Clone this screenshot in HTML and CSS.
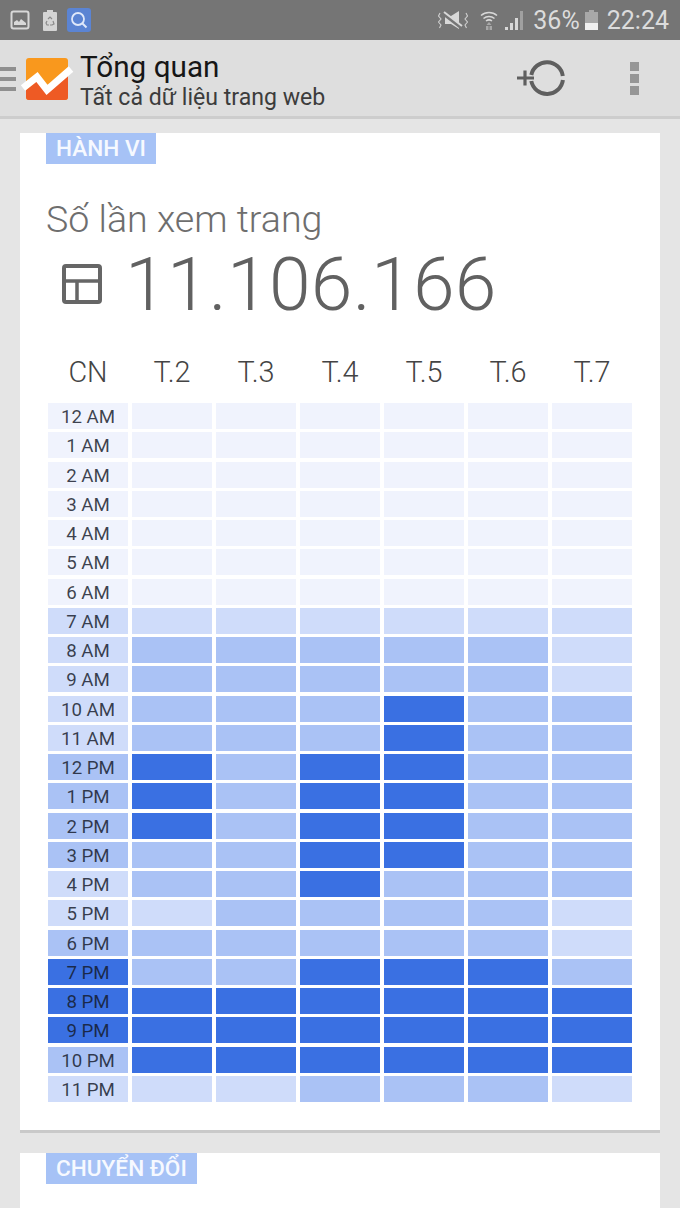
FILE: index.html
```html
<!DOCTYPE html>
<html lang="vi">
<head>
<meta charset="utf-8">
<title>Tổng quan</title>
<link rel="stylesheet" href="styles.css">
</head>
<body>
<header class="status">
  <div class="status-left">
    <svg class="ic" width="20" height="20" viewBox="0 0 20 20"><rect x="1.500" y="1.500" width="17" height="17" rx="2" fill="none" stroke="#d8d8d8" stroke-width="2"/><path d="M4 15v-3l3-2 2 2 2-3 5 4v2z" fill="#d8d8d8"/></svg>
    <svg class="ic" width="14" height="21" viewBox="0 0 14 21"><path d="M4 0h6v2h3a1 1 0 0 1 1 1v17a1 1 0 0 1-1 1H1a1 1 0 0 1-1-1V3a1 1 0 0 1 1-1h3z" fill="#d4d4d4"/><path d="M5 9l2-2 2 2M10 11l1 3-2 1H7M6 15H4l-1-2 1-2" fill="none" stroke="#8a8a8a" stroke-width="1.200"/></svg>
    <span class="search-badge"><svg width="18" height="18" viewBox="0 0 18 18"><circle cx="8" cy="8" r="6" fill="none" stroke="#dfe8fa" stroke-width="1.800"/><path d="M12.500 12.500l4 4" stroke="#dfe8fa" stroke-width="2"/></svg></span>
  </div>
  <div class="status-right">
    <svg class="mute" width="30" height="20" viewBox="0 0 30 20"><path d="M7 6h6l8-5v18l-8-5H7z" fill="#d8d8d8"/><path d="M6 4l18 14" stroke="#757575" stroke-width="3.500"/><path d="M6 2l18 14" stroke="#d8d8d8" stroke-width="2"/><path d="M2 3L0.500 6l2.500 3-2.500 3L3 15l-1.500 3M28 3l1.500 3L27 9l2.500 3-2.500 3 1.500 3" fill="none" stroke="#d0d0d0" stroke-width="1.100"/></svg>
    <svg class="wifi" width="18" height="20" viewBox="0 0 18 20"><path d="M1 5.500a12 12 0 0 1 16 0M3.500 8.500a8.500 8.500 0 0 1 11 0M6 11a5 5 0 0 1 6 0" fill="none" stroke="#d8d8d8" stroke-width="1.500"/><path d="M9 12l2.500 3h-5zM6 16h2.500v4H6zM9.500 16H12v4H9.500z" fill="#a8a8a8"/></svg>
    <svg class="signal" width="20" height="20" viewBox="0 0 20 20"><path d="M0 20v-3h3v3zM5 20v-7h3v7zM10 20V8h3v12z" fill="#d8d8d8"/><path d="M15 20V1h3v19z" fill="#a0a0a0"/></svg>
    <span class="pct">36%</span>
    <svg class="batt" width="13" height="20" viewBox="0 0 13 20"><path d="M4 0h5v2h4v18H0V2h4z" fill="#a8a8a8"/><path d="M0 13h13v7H0z" fill="#f0f0f0"/></svg>
    <span class="clock">22:24</span>
  </div>
</header>

<nav class="appbar">
  <div class="burger"><i></i><i></i><i></i></div>
  <svg class="logo" width="54" height="44" viewBox="0 0 54 44">
    <rect x="6" y="0" width="42" height="42" rx="3" fill="#f9981d"/>
    <path d="M6 32l11-9 10 13 21-19v22a3 3 0 0 1-3 3H9a3 3 0 0 1-3-3z" fill="#ee5a24"/>
    <path d="M3 30l14-11 10 13 24-21" fill="none" stroke="#fff" stroke-width="7"/>
  </svg>
  <div class="titles">
    <div class="title">Tổng quan</div>
    <div class="subtitle">Tất cả dữ liệu trang web</div>
  </div>
  <svg class="add-seg" width="50" height="38" viewBox="0 0 50 38"><path d="M1 19h17M9 11.500v15" stroke="#5f5f5f" stroke-width="3.200"/><path d="M15.300 16a16 16 0 0 1 31.500 1M46.900 21a16 16 0 0 1-31.600 1" fill="none" stroke="#5f5f5f" stroke-width="4"/></svg>
  <div class="overflow"><i></i><i></i><i></i></div>
</nav>

<main class="content">
<section class="card card-main">
  <div class="tag">HÀNH VI</div>
  <h2 class="metric-name">Số lần xem trang</h2>
  <div class="metric">
    <svg class="metric-icon" width="40" height="40" viewBox="0 0 40 40"><rect x="2" y="2" width="36" height="36" rx="2" fill="none" stroke="#666" stroke-width="4"/><path d="M2 17h36M15 17v21" stroke="#666" stroke-width="3.500"/></svg>
    <span class="metric-value">11.106.166</span>
  </div>
  <div class="days">
    <span>CN</span><span>T.2</span><span>T.3</span><span>T.4</span><span>T.5</span><span>T.6</span><span>T.7</span>
  </div>
  <div class="heat">
    <div class="c l0">12 AM</div><div class="c l0"></div><div class="c l0"></div><div class="c l0"></div><div class="c l0"></div><div class="c l0"></div><div class="c l0"></div>
    <div class="c l0">1 AM</div><div class="c l0"></div><div class="c l0"></div><div class="c l0"></div><div class="c l0"></div><div class="c l0"></div><div class="c l0"></div>
    <div class="c l0">2 AM</div><div class="c l0"></div><div class="c l0"></div><div class="c l0"></div><div class="c l0"></div><div class="c l0"></div><div class="c l0"></div>
    <div class="c l0">3 AM</div><div class="c l0"></div><div class="c l0"></div><div class="c l0"></div><div class="c l0"></div><div class="c l0"></div><div class="c l0"></div>
    <div class="c l0">4 AM</div><div class="c l0"></div><div class="c l0"></div><div class="c l0"></div><div class="c l0"></div><div class="c l0"></div><div class="c l0"></div>
    <div class="c l0">5 AM</div><div class="c l0"></div><div class="c l0"></div><div class="c l0"></div><div class="c l0"></div><div class="c l0"></div><div class="c l0"></div>
    <div class="c l0">6 AM</div><div class="c l0"></div><div class="c l0"></div><div class="c l0"></div><div class="c l0"></div><div class="c l0"></div><div class="c l0"></div>
    <div class="c l1">7 AM</div><div class="c l1"></div><div class="c l1"></div><div class="c l1"></div><div class="c l1"></div><div class="c l1"></div><div class="c l1"></div>
    <div class="c l1">8 AM</div><div class="c l2"></div><div class="c l2"></div><div class="c l2"></div><div class="c l2"></div><div class="c l2"></div><div class="c l1"></div>
    <div class="c l1">9 AM</div><div class="c l2"></div><div class="c l2"></div><div class="c l2"></div><div class="c l2"></div><div class="c l2"></div><div class="c l1"></div>
    <div class="c l1">10 AM</div><div class="c l2"></div><div class="c l2"></div><div class="c l2"></div><div class="c l3"></div><div class="c l2"></div><div class="c l2"></div>
    <div class="c l1">11 AM</div><div class="c l2"></div><div class="c l2"></div><div class="c l2"></div><div class="c l3"></div><div class="c l2"></div><div class="c l2"></div>
    <div class="c l2">12 PM</div><div class="c l3"></div><div class="c l2"></div><div class="c l3"></div><div class="c l3"></div><div class="c l2"></div><div class="c l2"></div>
    <div class="c l2">1 PM</div><div class="c l3"></div><div class="c l2"></div><div class="c l3"></div><div class="c l3"></div><div class="c l2"></div><div class="c l2"></div>
    <div class="c l2">2 PM</div><div class="c l3"></div><div class="c l2"></div><div class="c l3"></div><div class="c l3"></div><div class="c l2"></div><div class="c l2"></div>
    <div class="c l2">3 PM</div><div class="c l2"></div><div class="c l2"></div><div class="c l3"></div><div class="c l3"></div><div class="c l2"></div><div class="c l2"></div>
    <div class="c l1">4 PM</div><div class="c l2"></div><div class="c l2"></div><div class="c l3"></div><div class="c l2"></div><div class="c l2"></div><div class="c l2"></div>
    <div class="c l1">5 PM</div><div class="c l1"></div><div class="c l2"></div><div class="c l2"></div><div class="c l2"></div><div class="c l2"></div><div class="c l1"></div>
    <div class="c l2">6 PM</div><div class="c l2"></div><div class="c l2"></div><div class="c l2"></div><div class="c l2"></div><div class="c l2"></div><div class="c l1"></div>
    <div class="c l3">7 PM</div><div class="c l2"></div><div class="c l2"></div><div class="c l3"></div><div class="c l3"></div><div class="c l3"></div><div class="c l2"></div>
    <div class="c l3">8 PM</div><div class="c l3"></div><div class="c l3"></div><div class="c l3"></div><div class="c l3"></div><div class="c l3"></div><div class="c l3"></div>
    <div class="c l3">9 PM</div><div class="c l3"></div><div class="c l3"></div><div class="c l3"></div><div class="c l3"></div><div class="c l3"></div><div class="c l3"></div>
    <div class="c l2">10 PM</div><div class="c l3"></div><div class="c l3"></div><div class="c l3"></div><div class="c l3"></div><div class="c l3"></div><div class="c l3"></div>
    <div class="c l1">11 PM</div><div class="c l1"></div><div class="c l1"></div><div class="c l2"></div><div class="c l2"></div><div class="c l2"></div><div class="c l1"></div>
  </div>
</section>
<section class="card card-next">
  <div class="tag">CHUYỂN ĐỔI</div>
</section>
</main>
</body>
</html>
```

FILE: styles.css
```css
* { box-sizing: border-box; }
html, body { margin: 0; height: 1208px; overflow: hidden; }
body { background: #e5e5e5; font-family: Roboto, "Liberation Sans", sans-serif; color: #333; }

.status { height: 40px; background: #757575; display: flex; justify-content: space-between; align-items: center; padding: 0 11px 0 10px; }
.status-left { display: flex; align-items: center; gap: 13px; }
.search-badge { width: 24px; height: 24px; margin-left: -3px; background: #5b84d3; border-radius: 3px; display: flex; align-items: center; justify-content: center; }
.status-right { display: flex; align-items: center; color: #dcdcdc; }
.mute { margin-right: 12px; }
.wifi { margin-right: 7px; }
.signal { margin-right: 8px; }
.pct { font-size: 25px; margin-right: 5px; }
.batt { margin-right: 9px; }
.clock { font-size: 25px; }

.appbar { height: 79px; background: #dedede; border-bottom: 3px solid #cdcdcd; display: flex; align-items: center; }
.burger { width: 16px; margin-right: 4px; display: flex; flex-direction: column; gap: 6px; padding-top: 1px; }
.burger i { display: block; height: 4px; background: #8f8f8f; }
.logo { margin: 4px 6px 0 0; }
.titles { flex: 1; padding-top: 5px; }
.title { font-size: 29.700px; line-height: 34px; color: #161616; }
.subtitle { font-size: 23.100px; line-height: 27px; color: #3c3c3c; }
.add-seg { margin-right: 64px; }
.overflow { width: 9px; margin-right: 41px; display: flex; flex-direction: column; gap: 3px; }
.overflow i { display: block; height: 9px; background: #969696; }

.content { padding: 14px 20px 0; display: flex; flex-direction: column; gap: 20px; }
.card { background: #fff; padding: 0 28px 0 26px; }
.card-main { height: 1000px; border-bottom: 3px solid #c9c9c9; }
.card-next { height: 60px; }
.tag { display: inline-block; height: 31px; padding: 0 10px; line-height: 31px; background: #a6c2f6; color: #f6f9ff; font-size: 22.600px; font-weight: 500; vertical-align: top; }
.metric-name { margin: 32px 0 0; font-weight: 300; font-size: 37.600px; line-height: 46px; color: #6e6e6e; }
.metric { display: flex; align-items: center; margin-top: 5px; height: 74px; }
.metric-icon { margin: 0 23px 0 16px; }
.metric-value { font-weight: 300; font-size: 75px; line-height: 74px; color: #616161; letter-spacing: 0.300px; }
.days { display: grid; grid-template-columns: repeat(7, 80px); column-gap: 4px; margin: 31px 0 0 2px; height: 51px; line-height: 40px; font-size: 28.800px; font-weight: 300; text-align: center; color: #444; }
.heat { display: grid; grid-template-columns: repeat(7, 80px); grid-auto-rows: 26px; gap: 3.260px 4px; margin-left: 2px; }
.c { font-size: 18.700px; line-height: 28px; text-align: center; color: rgba(20, 25, 40, 0.82); overflow: hidden; }
.l0 { background: #f0f3fd; }
.l1 { background: #cfdcfa; }
.l2 { background: #aac2f5; }
.l3 { background: #3a70e2; }
```
